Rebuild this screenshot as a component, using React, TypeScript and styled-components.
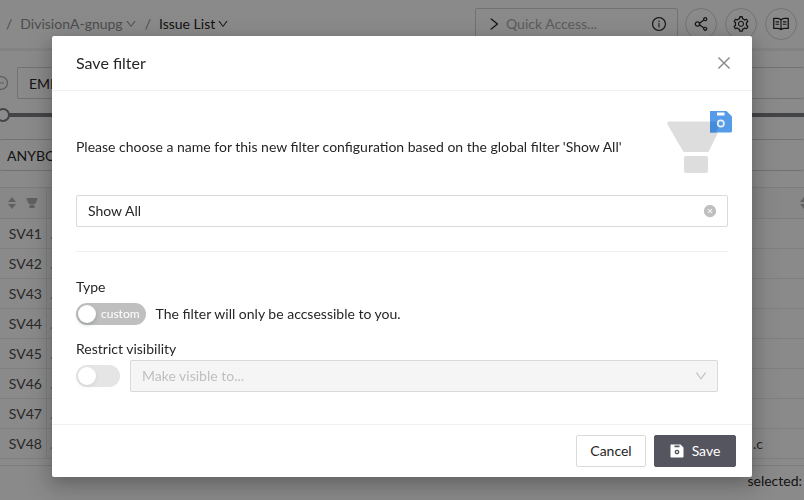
import React, { useState } from "react";
import styled, { createGlobalStyle, css } from "styled-components";
import {
  AiFillCloseCircle,
  AiOutlineClose,
  AiOutlineDown,
  AiOutlineInfoCircle,
  AiOutlineMinusCircle,
  AiOutlineRead,
  AiOutlineRight,
  AiOutlineSetting,
  AiOutlineShareAlt,
} from "react-icons/ai";

const GlobalStyle = createGlobalStyle`
  * { box-sizing: border-box; }
  body {
    margin: 0;
    overflow: hidden;
    background: #fff;
    color: #262626;
    font: 14px/22px Lato, "Liberation Sans", sans-serif;
  }
  button, input, select { font: inherit; color: inherit; }
`;

const Page = styled.div`
  min-height: 100vh;
  background: #fcfcfc;
`;

const TopBar = styled.header`
  display: flex;
  align-items: center;
  justify-content: space-between;
  height: 51px;
  padding: 0 7px 0 6px;
  border-bottom: 3px solid #efefef;
`;

const Breadcrumb = styled.nav`
  display: flex;
  align-items: center;
  gap: 8px;
  color: #8c8c8c;
`;

const Crumb = styled.a<{ $current?: boolean }>`
  display: flex;
  align-items: center;
  gap: 2px;
  color: ${(p) => (p.$current ? "#1f1f1f" : "#8c8c8c")};
  text-decoration: none;
  svg { width: 12px; height: 12px; }
`;

const Tools = styled.div`
  display: flex;
  align-items: center;
  gap: 8px;
`;

const QuickAccess = styled.label`
  display: flex;
  align-items: center;
  gap: 4px;
  width: 203px;
  height: 32px;
  margin-right: -1px;
  padding: 0 10px;
  border: 1px solid #d0d0d0;
  border-radius: 2px;
  svg { flex: none; width: 16px; height: 16px; }
`;

const QuickInput = styled.input`
  flex: 1;
  min-width: 0;
  padding: 0;
  border: 0;
  outline: 0;
  background: none;
  &::placeholder { color: #a8a8a8; opacity: 1; }
`;

const RoundButton = styled.button`
  display: grid;
  place-items: center;
  width: 32px;
  height: 32px;
  padding: 0;
  border: 1px solid #d0d0d0;
  border-radius: 50%;
  background: none;
  svg { width: 18px; height: 18px; }
`;

const FilterRow = styled.div`
  display: flex;
  align-items: center;
  gap: 8px;
  margin-top: 16px;
  color: #a6a6a6;
  svg { flex: none; width: 16px; height: 16px; margin-left: -7px; }
`;

const FilterBox = styled.input<{ $wide?: boolean }>`
  display: block;
  flex: 1;
  width: 100%;
  height: 32px;
  padding: 0 ${(p) => (p.$wide ? 7 : 11)}px;
  border: 1px solid #d0d0d0;
  border-width: ${(p) => (p.$wide ? "1px 0" : "1px 0 1px 1px")};
  border-radius: 2px;
  background: none;
  color: #262626;
`;

const Slider = styled.input`
  display: block;
  appearance: none;
  width: calc(100% + 4px);
  height: 14px;
  margin: 9px 0 17px -4px;
  background: linear-gradient(#7b7c84, #7b7c84) center / 100% 4px no-repeat;
  &::-webkit-slider-thumb {
    appearance: none;
    width: 14px;
    height: 14px;
    border: 2px solid #7b7c84;
    border-radius: 50%;
    background: #fff;
  }
`;

const Table = styled.table`
  width: 100%;
  margin-top: 16px;
  border-collapse: separate;
  border-spacing: 0;
  table-layout: fixed;
  border-bottom: 1px solid #e4e4e4;
  padding-bottom: 6px;
`;

const HeadCell = styled.th<{ $width?: number }>`
  width: ${(p) => (p.$width ? `${p.$width}px` : "auto")};
  height: 32px;
  padding: 0 0 0 8px;
  border: solid #e4e4e4;
  border-width: 1px 0;
  background: #f7f7f7;
  &:first-child { border-right-width: 1px; }
`;

const HeadIcons = styled.span<{ $end?: boolean }>`
  display: flex;
  align-items: center;
  gap: 10px;
  justify-content: ${(p) => (p.$end ? "flex-end" : "flex-start")};
  margin-right: ${(p) => (p.$end ? "-4px" : "0")};
  color: #b0b0b0;
`;

const Cell = styled.td<{ $link?: boolean }>`
  height: 30px;
  padding: 0 4px 0 3px;
  border-bottom: 1px solid #e8e8e8;
  color: ${(p) => (p.$link ? "#d98a9a" : "#4a4a4a")};
  &:first-child { text-align: right; border-right: 1px solid #e4e4e4; }
  &:last-child { color: #4a4a4a; }
`;

const Selected = styled.footer`
  padding: 4px 2px 0;
  text-align: right;
`;

const Mask = styled.div`
  position: fixed;
  inset: 0;
  overflow: hidden;
  padding: 36px 16px;
  background: rgba(0, 0, 0, 0.45);
`;

const Dialog = styled.section`
  max-width: 700px;
  margin: 0 auto;
  border-radius: 2px;
  background: #fff;
  box-shadow: 0 6px 16px rgba(0, 0, 0, 0.2), 0 9px 28px 8px rgba(0, 0, 0, 0.12);
`;

const DialogHeader = styled.header`
  display: flex;
  align-items: center;
  justify-content: space-between;
  padding: 16px 19px 16px 24px;
  border-bottom: 1px solid #f0f0f0;
`;

const Title = styled.h2`
  margin: 0;
  font-size: 16px;
  line-height: 22px;
  font-weight: 400;
`;

const IconButton = styled.button<{ $tone: string }>`
  display: grid;
  place-items: center;
  padding: 0;
  border: 0;
  background: none;
  color: ${(p) => p.$tone};
`;

const DialogBody = styled.div`
  padding: 20px 24px 32px;
`;

const Intro = styled.div`
  display: flex;
  justify-content: space-between;
  margin-right: -4px;
  height: 84px;
  p { margin: 25px 0 0; }
  svg { flex: none; }
`;

const NameField = styled.label`
  display: flex;
  align-items: center;
  height: 32px;
  padding: 0 10px 0 11px;
  border: 1px solid #d9d9d9;
  border-radius: 2px;
`;

const NameInput = styled.input`
  flex: 1;
  padding: 0;
  border: 0;
  outline: 0;
  background: none;
`;

const Divider = styled.hr`
  height: 1px;
  margin: 24px 0;
  border: 0;
  background: #f0f0f0;
`;

const Caption = styled.label`
  display: block;
  line-height: 22px;
`;

const OptionRow = styled.div<{ $inset?: boolean }>`
  display: flex;
  align-items: center;
  gap: 10px;
  ${(p) =>
    p.$inset
      ? css`margin-right: 10px;`
      : css`height: 32px; margin-bottom: 8px;`}
`;

const Toggle = styled.button<{ $muted?: boolean }>`
  display: flex;
  align-items: center;
  flex: none;
  min-width: 44px;
  height: 22px;
  padding: 0 6px 0 2px;
  gap: 5px;
  border: 0;
  border-radius: 11px;
  background: ${(p) => (p.$muted ? "#e5e5e5" : "#bfbfbf")};
  color: #fff;
  font-size: 12px;
  &::before {
    content: "";
    width: 18px;
    height: 18px;
    border-radius: 50%;
    background: #fff;
    box-shadow: 0 2px 4px rgba(0, 35, 11, ${(p) => (p.$muted ? 0.08 : 0.2)});
  }
`;

const SelectBox = styled.div`
  display: grid;
  flex: 1;
  align-items: center;
  > * { grid-area: 1 / 1; }
  svg {
    justify-self: end;
    margin-right: 10px;
    color: #bfbfbf;
    pointer-events: none;
  }
`;

const Select = styled.select`
  appearance: none;
  width: 100%;
  height: 32px;
  padding: 0 11px;
  border: 1px solid #d9d9d9;
  border-radius: 2px;
  background: #f5f5f5;
  color: #bfbfbf;
  opacity: 1;
`;

const DialogFooter = styled.footer`
  display: flex;
  justify-content: flex-end;
  gap: 8px;
  padding: 10px 16px;
  border-top: 1px solid #f0f0f0;
`;

const Button = styled.button<{ $primary?: boolean }>`
  display: flex;
  align-items: center;
  justify-content: center;
  gap: 8px;
  min-width: ${(p) => (p.$primary ? 82 : 70)}px;
  height: 32px;
  padding: 0 10px;
  border: 1px solid ${(p) => (p.$primary ? "#555560" : "#d9d9d9")};
  border-radius: 2px;
  background: ${(p) => (p.$primary ? "#555560" : "#fff")};
  color: ${(p) => (p.$primary ? "#fff" : "#262626")};
`;

function SortIcon() {
  return (
    <svg width="8" height="12" viewBox="0 0 8 12" fill="currentColor" aria-hidden>
      <path d="M4 0 8 5H0zM4 12 0 7h8z" />
    </svg>
  );
}

function FunnelIcon() {
  return (
    <svg width="12" height="12" viewBox="0 0 12 12" fill="currentColor" aria-hidden>
      <path d="M.8 1h10.400q.800 0 .4.800L9.200 7H2.800L.400 1.800Q0 1 .800 1zM3.500 7.800h5v3.200h-5z" />
    </svg>
  );
}

function FloppyIcon() {
  return (
    <svg width="14" height="14" viewBox="0 0 14 14" aria-hidden>
      <path
        fill="#fff"
        fillRule="evenodd"
        d="M1 .5h9.5L13.5 3.5v9.2q0 .8-.8.8H1.3q-.8 0-.8-.8V1.2Q.5.5 1 .5zM4.5 1.5v1.7h5V1.5zM7 5.7a2.4 2.4 0 1 0 0 4.8 2.4 2.4 0 0 0 0-4.8zm0 1.4a1 1 0 1 1 0 2 1 1 0 0 1 0-2z"
      />
    </svg>
  );
}

function SaveFilterArt() {
  return (
    <svg width="65" height="62" viewBox="0 0 65 62" aria-hidden>
      <path d="M2 10.500h52q2.500.500 1 3L41.500 41h-25L.500 13.500Q-.300 10.800 2 10.500z" fill="#ddd" />
      <rect x="17" y="45" width="24" height="17" rx="2" fill="#ddd" />
      <path
        d="M43 0h16.500L65 5.500V20q0 1.500-1.500 1.500H43z"
        fill="#559be8"
      />
      <path d="M43 10.500h11.500L49 21.500h-6z" fill="#468bd8" />
      <rect x="50" y="1.500" width="7.500" height="3" fill="#fff" />
      <circle cx="53.800" cy="12.500" r="3.100" fill="#5b9fe8" stroke="#e6eef8" strokeWidth="1.700" />
    </svg>
  );
}

const issues = ["SV41", "SV42", "SV43", "SV44", "SV45", "SV46", "SV47", "SV48"];

export default function App() {
  const [name, setName] = useState("Show All");
  const [query, setQuery] = useState("");

  return (
    <>
      <GlobalStyle />
      <Page>
        <TopBar>
          <Breadcrumb aria-label="Breadcrumb">
            <span>/</span>
            <Crumb href="#project">DivisionA-gnupg <AiOutlineDown /></Crumb>
            <span>/</span>
            <Crumb href="#issues" $current>Issue List <AiOutlineDown /></Crumb>
          </Breadcrumb>
          <Tools>
            <QuickAccess>
              <AiOutlineRight />
              <QuickInput
                aria-label="Quick Access"
                placeholder="Quick Access..."
                value={query}
                onChange={(e) => setQuery(e.target.value)}
              />
              <AiOutlineInfoCircle />
            </QuickAccess>
            <RoundButton aria-label="Share"><AiOutlineShareAlt /></RoundButton>
            <RoundButton aria-label="Settings"><AiOutlineSetting /></RoundButton>
            <RoundButton aria-label="Documentation"><AiOutlineRead /></RoundButton>
          </Tools>
        </TopBar>

        <FilterRow>
          <AiOutlineMinusCircle />
          <FilterBox aria-label="Baseline" defaultValue="EMPTY" />
        </FilterRow>
        <Slider type="range" aria-label="Version range" defaultValue={0} />
        <FilterBox $wide aria-label="Owner" defaultValue="ANYBODY" />

        <Table>
          <thead>
            <tr>
              <HeadCell $width={47}><HeadIcons><SortIcon /><FunnelIcon /></HeadIcons></HeadCell>
              <HeadCell />
              <HeadCell $width={54}><HeadIcons $end><SortIcon /></HeadIcons></HeadCell>
            </tr>
          </thead>
          <tbody>
            {issues.map((id) => (
              <tr key={id}>
                <Cell>{id}</Cell>
                <Cell $link>.</Cell>
                <Cell>{id === "SV48" ? ".c" : ""}</Cell>
              </tr>
            ))}
          </tbody>
        </Table>
        <Selected>selected:</Selected>
      </Page>

      <Mask>
        <Dialog role="dialog" aria-modal="true" aria-labelledby="dialog-title">
          <DialogHeader>
            <Title id="dialog-title">Save filter</Title>
            <IconButton $tone="#8c8c8c" aria-label="Close"><AiOutlineClose size={18} /></IconButton>
          </DialogHeader>
          <DialogBody>
            <Intro>
              <p>Please choose a name for this new filter configuration based on the global filter 'Show All'</p>
              <SaveFilterArt />
            </Intro>
            <NameField>
              <NameInput aria-label="Filter name" value={name} onChange={(e) => setName(e.target.value)} />
              <IconButton $tone="#bfbfbf" aria-label="Clear name" onClick={() => setName("")}>
                <AiFillCloseCircle size={14} />
              </IconButton>
            </NameField>
            <Divider />
            <Caption htmlFor="filter-type">Type</Caption>
            <OptionRow>
              <Toggle id="filter-type" role="switch" aria-checked="false">custom</Toggle>
              <span>The filter will only be accsessible to you.</span>
            </OptionRow>
            <Caption htmlFor="restrict">Restrict visibility</Caption>
            <OptionRow $inset>
              <Toggle id="restrict" role="switch" aria-checked="false" disabled $muted />
              <SelectBox>
                <Select aria-label="Make visible to" disabled>
                  <option>Make visible to...</option>
                </Select>
                <AiOutlineDown size={14} />
              </SelectBox>
            </OptionRow>
          </DialogBody>
          <DialogFooter>
            <Button>Cancel</Button>
            <Button $primary><FloppyIcon />Save</Button>
          </DialogFooter>
        </Dialog>
      </Mask>
    </>
  );
}
